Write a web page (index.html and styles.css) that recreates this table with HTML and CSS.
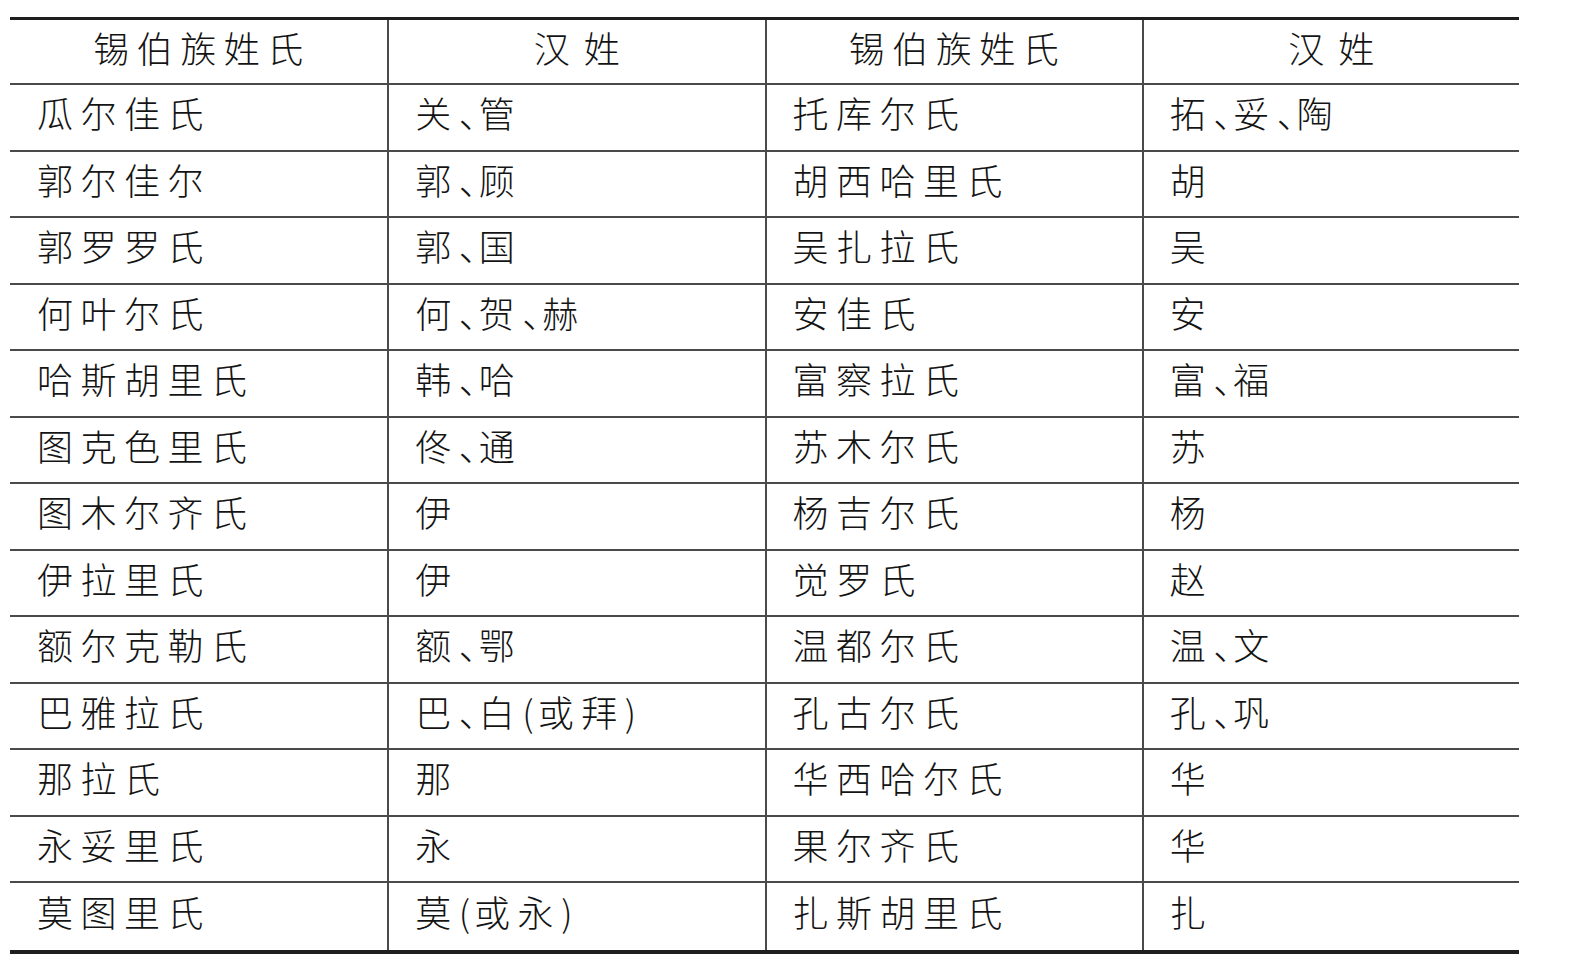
FILE: index.html
```html
<!DOCTYPE html>
<html lang="zh-CN">
<head>
<meta charset="utf-8">
<title>锡伯族姓氏与汉姓</title>
<link rel="stylesheet" href="styles.css">
</head>
<body>
<div class="sheet">
  <div class="cell head">锡伯族姓氏</div>
  <div class="cell head han">汉姓</div>
  <div class="cell head">锡伯族姓氏</div>
  <div class="cell head han">汉姓</div>

  <div class="cell">瓜尔佳氏</div><div class="cell">关<span class="dun">、</span>管</div><div class="cell">托库尔氏</div><div class="cell">拓<span class="dun">、</span>妥<span class="dun">、</span>陶</div>
  <div class="cell">郭尔佳尔</div><div class="cell">郭<span class="dun">、</span>顾</div><div class="cell">胡西哈里氏</div><div class="cell">胡</div>
  <div class="cell">郭罗罗氏</div><div class="cell">郭<span class="dun">、</span>国</div><div class="cell">吴扎拉氏</div><div class="cell">吴</div>
  <div class="cell">何叶尔氏</div><div class="cell">何<span class="dun">、</span>贺<span class="dun">、</span>赫</div><div class="cell">安佳氏</div><div class="cell">安</div>
  <div class="cell">哈斯胡里氏</div><div class="cell">韩<span class="dun">、</span>哈</div><div class="cell">富察拉氏</div><div class="cell">富<span class="dun">、</span>福</div>
  <div class="cell">图克色里氏</div><div class="cell">佟<span class="dun">、</span>通</div><div class="cell">苏木尔氏</div><div class="cell">苏</div>
  <div class="cell">图木尔齐氏</div><div class="cell">伊</div><div class="cell">杨吉尔氏</div><div class="cell">杨</div>
  <div class="cell">伊拉里氏</div><div class="cell">伊</div><div class="cell">觉罗氏</div><div class="cell">赵</div>
  <div class="cell">额尔克勒氏</div><div class="cell">额<span class="dun">、</span>鄂</div><div class="cell">温都尔氏</div><div class="cell">温<span class="dun">、</span>文</div>
  <div class="cell">巴雅拉氏</div><div class="cell">巴<span class="dun">、</span>白<span class="par">(</span>或拜<span class="par">)</span></div><div class="cell">孔古尔氏</div><div class="cell">孔<span class="dun">、</span>巩</div>
  <div class="cell">那拉氏</div><div class="cell">那</div><div class="cell">华西哈尔氏</div><div class="cell">华</div>
  <div class="cell">永妥里氏</div><div class="cell">永</div><div class="cell">果尔齐氏</div><div class="cell">华</div>
  <div class="cell last">莫图里氏</div><div class="cell last">莫<span class="par">(</span>或永<span class="par">)</span></div><div class="cell last">扎斯胡里氏</div><div class="cell last">扎</div>
</div>
</body>
</html>
```

FILE: styles.css
```css
html, body {
  margin: 0;
  padding: 0;
  background: #ffffff;
}

body {
  font-family: "Noto Sans CJK SC", "Noto Sans CJK TC", sans-serif;
  font-weight: 300;
  color: #141414;
}

.sheet {
  margin: 17px 0 0 10px;
  width: 1509px;
  display: grid;
  grid-template-columns: repeat(4, 1fr);
  grid-auto-rows: 66.5px;
  grid-template-rows: 65px;
  border-top: 3px solid #1e1e1e;
  border-bottom: 4px solid #1e1e1e;
}

.cell {
  box-sizing: border-box;
  display: flex;
  align-items: center;
  padding: 0 0 10px 26px;
  border-bottom: 2px solid #4a4a4a;
  border-left: 2px solid #4a4a4a;
  font-size: 36px;
  line-height: 1;
  letter-spacing: 7.5px;
  white-space: nowrap;
}

.cell:nth-child(4n + 1) {
  border-left: none;
  padding-left: 27px;
}

.cell.last {
  border-bottom: none;
}

.head {
  justify-content: center;
  padding-left: 7px;
}

.head:nth-child(4n + 1) {
  padding-left: 7px;
}

.head.han {
  letter-spacing: 14px;
  padding-left: 14px;
}

.dun {
  font-feature-settings: "halt";
  letter-spacing: 2px;
}

.par {
  letter-spacing: 4px;
}
```
